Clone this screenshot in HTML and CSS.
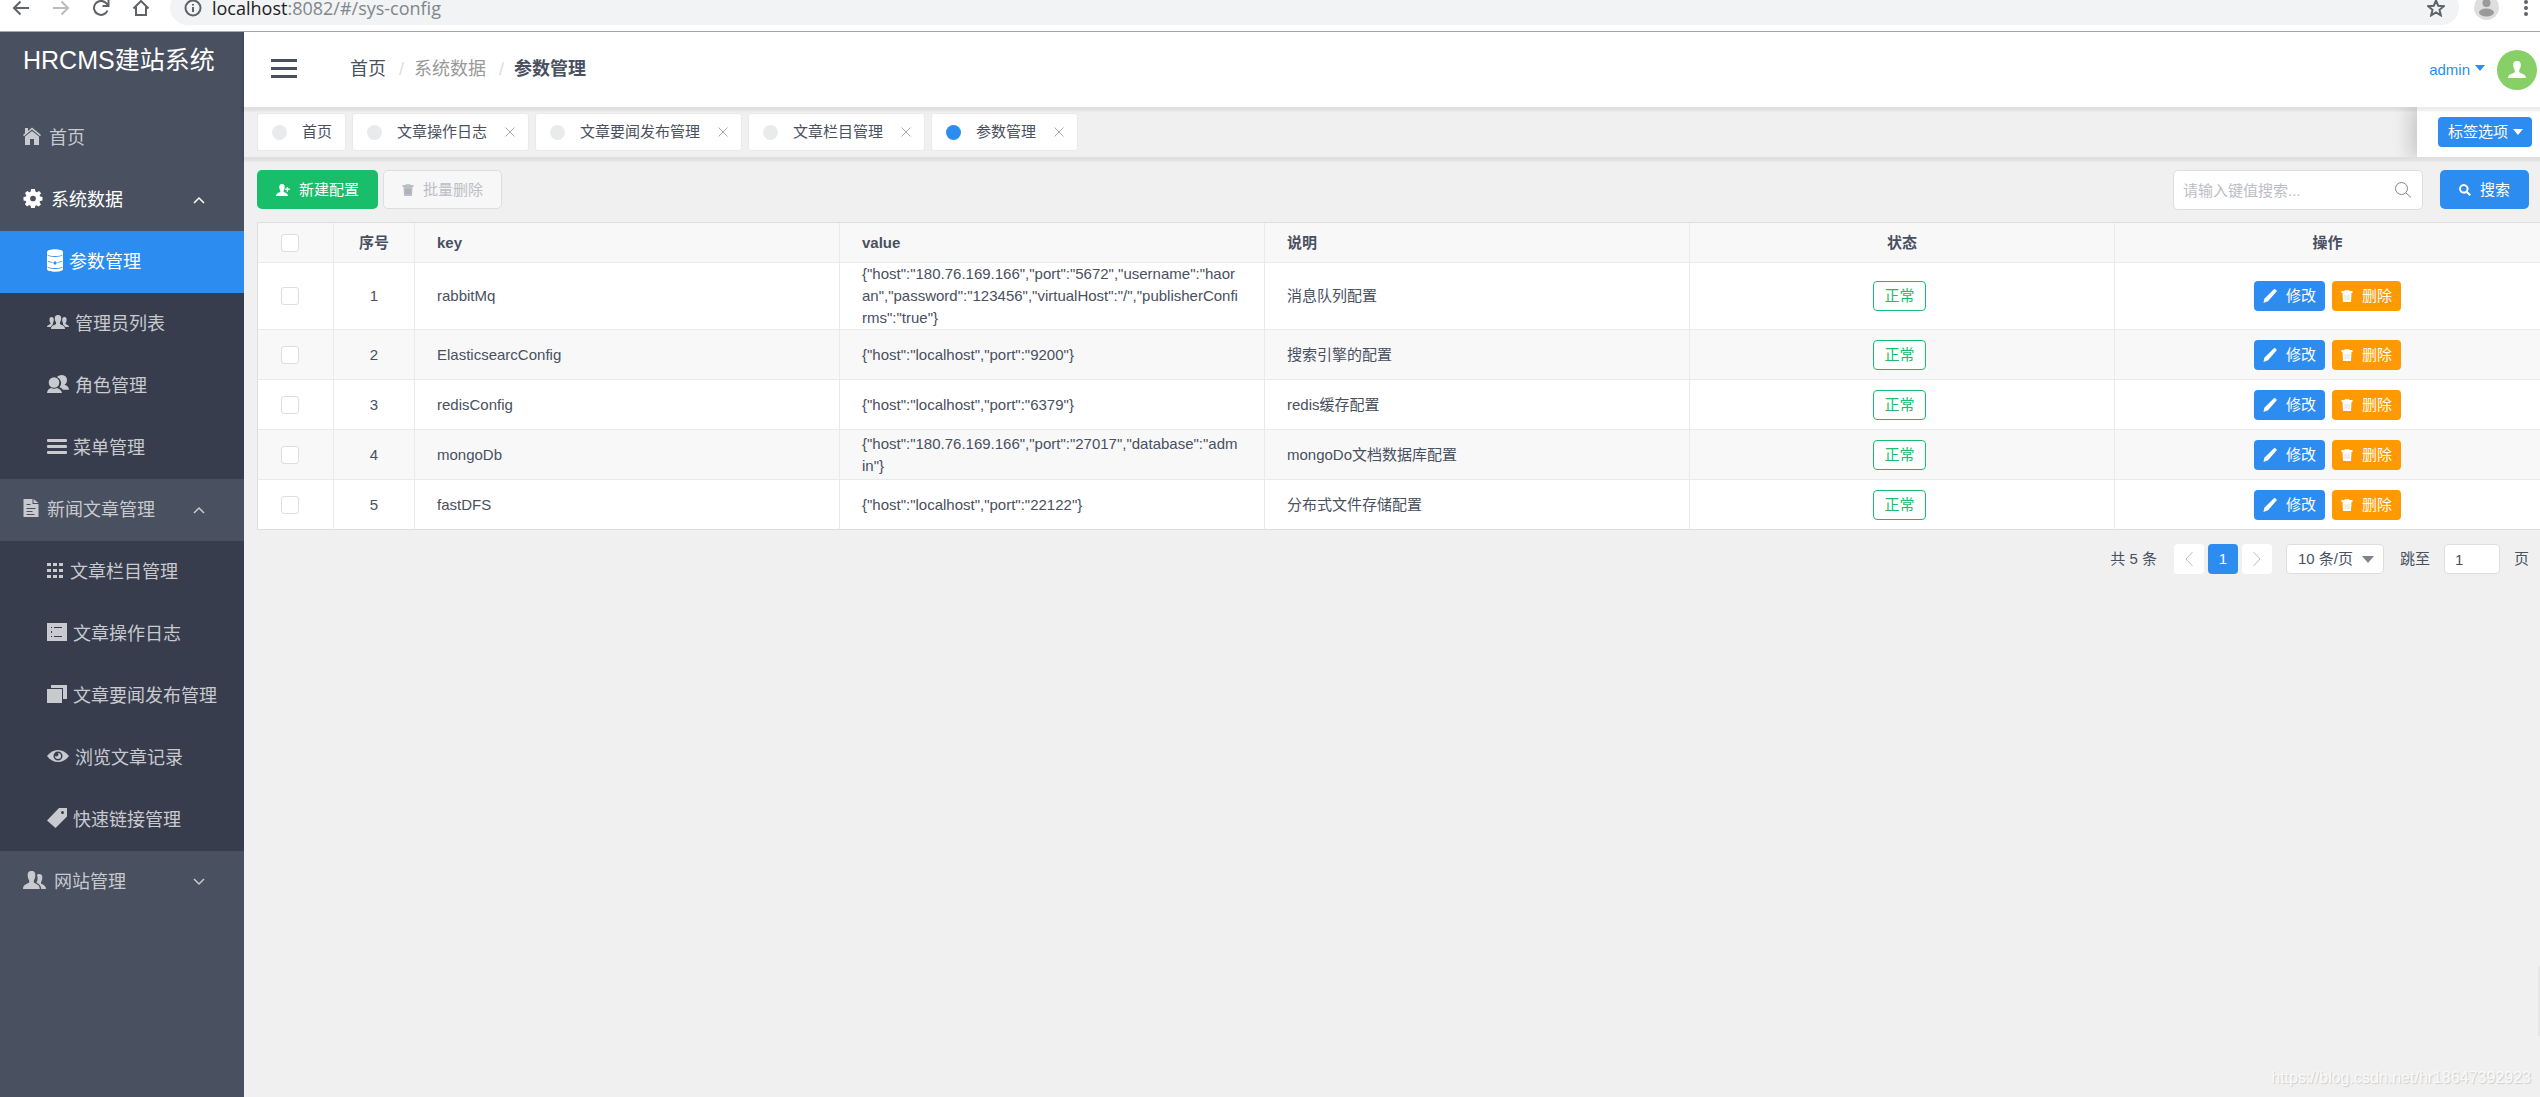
FILE: index.html
```html
<!DOCTYPE html>
<html lang="zh-CN">
<head>
<meta charset="utf-8">
<title>HRCMS建站系统</title>
<link rel="stylesheet" href="styles.css">
</head>
<body>
<svg class="sprite" aria-hidden="true">
  <symbol id="i-home" viewBox="0 0 18 18"><path d="M2 1h3v3L9 .5 18 8l-1 1.300L9 2.600 1 9.300 0 8l2-1.700z"/><path d="M2 9.600 9 4l7 5.600V18h-5v-6H7v6H2z"/></symbol>
  <symbol id="i-gear" viewBox="0 0 20 20"><path fill-rule="evenodd" d="M8 0h4l.6 2.700 1.500.7L16.500 2 18.500 4.500 17 6.700l.5 1.300 2.500.5v3.500l-2.500.6-.6 1.300 1.500 2.300-2.500 2.300-2.200-1.400-1.300.5L12 20H8l-.6-2.500-1.400-.6-2.200 1.500-2.300-2.400 1.400-2.200-.5-1.300L0 12V8.500L2.500 8l.5-1.400L1.500 4.300 4 2l2.100 1.400 1.300-.6zM10 7a3 3 0 1 0 0 6 3 3 0 0 0 0-6z"/></symbol>
  <symbol id="i-db" viewBox="0 0 16 23"><path fill-rule="evenodd" d="M0 3C0-.7 16-.7 16 3v17c0 3.700-16 3.700-16 0zM.5 5.500v.8c2 2.200 13 2.200 15 0v-.8c-2 2-13 2-15 0zm0 12v.8c2 2.200 13 2.200 15 0v-.8c-2 2-13 2-15 0zM1 12v.8l4.500 1.200v-.8zm14 0v.8L10.500 14v-.8zM8 12l-2 2 2 2 2-2z"/></symbol>
  <symbol id="i-team" viewBox="0 0 22 14"><path d="M11 0c2.500 0 3.300 1.500 3.200 3.500 0 2-.8 3-1.200 4v1.500c2 1.500 5 1.500 5 5H4c0-3.500 3-3.500 5-5V7.500c-.4-1-1.200-2-1.200-4C7.700 1.500 8.500 0 11 0zM4.500 2C6 2 7 3 6.800 5c0 1.500-.5 2.300-.9 3v1.500L3.500 12H0c0-2 2-2 3.500-3V8c-.5-.7-1-1.500-1-3C2.400 3 3 2 4.500 2zM17.500 2c1.500 0 2.200 1 2.100 3 0 1.500-.5 2.300-1 3v1c1.500 1 3.400 1 3.400 3h-3.500L16 9.500V8c-.4-.7-.8-1.500-.8-3C15 3 16 2 17.500 2z"/></symbol>
  <symbol id="i-role" viewBox="0 0 22 18"><path d="M15 0a5 5 0 0 1 5 5.300c0 2-1 3.700-2.500 4.500 2.500.8 4.500 2.200 4.500 5h-6c-.7-1.300-2-2-3.500-2.500A6.500 6.500 0 0 0 10 2C11 .7 13 0 15 0z"/><circle cx="7" cy="7.500" r="5.300"/><path d="M0 18c.3-2.700 1.500-4 4-5 2 1 4 1 6 0 2.500 1 4.500 2.300 5 5z"/></symbol>
  <symbol id="i-menu" viewBox="0 0 20 15"><rect width="20" height="3" rx="1"/><rect y="6" width="20" height="3" rx="1"/><rect y="12" width="20" height="3" rx="1"/></symbol>
  <symbol id="i-doc" viewBox="0 0 15 18"><path fill-rule="evenodd" d="M0 0h9v5h6v13H0zM10 0l5 4h-5zM3 5v1h4V5zm0 4v1h9V9zm0 3v1h6v-1zm0 3v1h8v-1z"/></symbol>
  <symbol id="i-grid" viewBox="0 0 17 15"><path d="M0 0h4v3H0zM6 0h4v3H6zM12 0h4v3h-4zM0 6h4v3H0zM6 6h4v3H6zM12 6h4v3h-4zM0 12h4v3H0zM6 12h4v3H6zM12 12h4v3h-4z"/></symbol>
  <symbol id="i-list" viewBox="0 0 20 18"><path fill-rule="evenodd" d="M0 0h20v18H0zM4 4v1h1V4zm3 0v1h8V4zM4 8v2h1V8zm0 5v1h1v-1zm3 0v1h8v-1z"/></symbol>
  <symbol id="i-copy" viewBox="0 0 20 18"><path d="M0 4h15v14H0zM4 0h16v14h-4V3H4z"/></symbol>
  <symbol id="i-eye" viewBox="0 0 22 12"><path fill-rule="evenodd" d="M0 6c3-4 7-6 11-6s8 2 11 6c-3 4-7 6-11 6S3 10 0 6zm11-4.500a4.500 4.500 0 1 0 0 9 4.500 4.500 0 0 0 0-9z"/><path d="M11 3a3 3 0 1 1-3 3l2 .5L11.500 5z"/></symbol>
  <symbol id="i-tag" viewBox="0 0 20 20"><path fill-rule="evenodd" d="M12 0h8v8.500L8.500 20 0 12.500zM15.500 3a1.500 1.500 0 1 0 0 3 1.500 1.500 0 0 0 0-3z"/></symbol>
  <symbol id="i-pair" viewBox="0 0 23 18"><path d="M8.500 0c3 0 4 2 3.800 4.500 0 2.500-.9 3.500-1.500 5v2c2 1.500 6 2 6 6.500H0c0-4.500 4-5 6.200-6.500v-2c-.6-1.500-1.500-2.500-1.500-5C4.500 2 5.500 0 8.500 0z"/><path d="M16 3c2.500 0 3.500 1.500 3.300 4 0 2-.8 3-1.300 4v1.500c1.500 1 5 2 5 5.500h-4.700c-.3-3.500-2.300-5-4.800-6.200.7-1.500 1.300-2.800 1-5.300 0-1.500-.5-2.300-.5-2.600.5-.6 1-.9 2-.9z"/></symbol>
  <symbol id="i-user" viewBox="0 0 18 17"><path d="M9 0c3 0 4 2 3.800 4.500 0 2.500-1.200 3.500-1.600 4.800v2C13 13 18 13 18 17H0c0-4 5-4 6.800-5.700v-2C6.400 8 5.200 7 5.200 4.500 5 2 6 0 9 0z"/></symbol>
  <symbol id="i-adduser" viewBox="0 0 14 12"><path d="M6 0c2.200 0 2.800 1.400 2.700 3.200 0 1.700-.7 2.500-1 3.300v1.300C9 9 12 9 12 12H0c0-3 3-3 4.300-4.200V6.500c-.3-.8-1-1.600-1-3.300C3.200 1.400 3.800 0 6 0zM10.700 3h1.300v1.500h1.800V6H12v1.700h-1.300V6H9.300V4.500h1.400z"/></symbol>
  <symbol id="i-trash" viewBox="0 0 12 12"><path fill-rule="evenodd" d="M3.500 1q0-1 1-1h3q1 0 1 1H11.500v2H.5V1zM4.500 1h3V.7h-3zM1.500 3h9L10 12H2z"/><path d="M4 5l.2 5M6 5v5M8 5l-.2 5" fill="none" stroke="#000" stroke-opacity=".18" stroke-width=".7"/></symbol>
  <symbol id="i-pen" viewBox="0 0 14 14"><path d="M11 .3q.6-.5 1.200 0l1.200 1q.6.6.1 1.300L5 12.300.5 14l.8-4.300z"/></symbol>
  <symbol id="i-search" viewBox="0 0 12 12"><path fill-rule="evenodd" d="M4.800 0a4.800 4.800 0 0 1 4 7.400L12 10.500 10.500 12 7.400 8.900A4.800 4.800 0 1 1 4.800 0zm0 2a2.800 2.800 0 1 0 0 5.600 2.800 2.800 0 0 0 0-5.600z"/></symbol>
  <symbol id="i-close" viewBox="0 0 10 10"><path d="M.5.5l9 9M9.500.5l-9 9" fill="none" stroke="currentColor"/></symbol>
  <symbol id="i-caret" viewBox="0 0 10 6"><path d="M0 0h10L5 6z"/></symbol>
  <symbol id="i-up" viewBox="0 0 12 8"><path d="M1 7l5-5 5 5" fill="none" stroke="currentColor" stroke-width="1.500"/></symbol>
  <symbol id="i-down" viewBox="0 0 12 8"><path d="M1 1l5 5 5-5" fill="none" stroke="currentColor" stroke-width="1.500"/></symbol>
</svg>

<div class="browser">
  <div class="browser-row">
    <button class="nav-btn" aria-label="后退"><svg width="18" height="16" viewBox="0 0 18 16"><path d="M17 8H2M8.500 1.500 2 8l6.500 6.500"/></svg></button>
    <button class="nav-btn off" aria-label="前进"><svg width="18" height="16" viewBox="0 0 18 16"><path d="M1 8h15M9.500 1.500 16 8l-6.500 6.500"/></svg></button>
    <button class="nav-btn" aria-label="刷新"><svg width="18" height="16" viewBox="0 0 18 16"><path d="M15.500 10.500A7 7 0 1 1 14 3l2 2.500M16.500 0v6h-6"/></svg></button>
    <button class="nav-btn" aria-label="主页"><svg width="18" height="16" viewBox="0 0 18 16"><path d="M1.500 8.500 9 1l7.500 7.500M4 7v8h10V7"/></svg></button>
    <div class="address">
      <svg width="18" height="18" viewBox="0 0 18 18"><circle cx="9" cy="9" r="7.500"/><path d="M9 8v5M9 5v1.500"/></svg>
      <span class="url"><b>localhost</b>:8082/#/sys-config</span>
      <svg class="star" width="18" height="18" viewBox="0 0 18 18"><path d="M9 1.500l2.200 5.200 5.500.5-4.200 3.600 1.300 5.500L9 13.400l-4.800 2.900 1.300-5.500L1.300 7.200l5.500-.5z"/></svg>
    </div>
    <svg class="profile" width="25" height="25" viewBox="0 0 25 25"><circle cx="12.500" cy="12.500" r="12.500" fill="#dedede"/><circle cx="12.500" cy="8" r="4" fill="#9a9a9a"/><ellipse cx="12.500" cy="17.500" rx="7.500" ry="4" fill="#9a9a9a"/></svg>
    <svg class="dots" width="4" height="16" viewBox="0 0 4 16"><circle cx="2" cy="2" r="2"/><circle cx="2" cy="8" r="2"/><circle cx="2" cy="14" r="2"/></svg>
  </div>
</div>

<div class="app">
  <aside class="sidebar">
    <h1 class="brand">HRCMS建站系统</h1>
    <nav>
      <a class="item" href="#home"><svg width="18" height="18"><use href="#i-home"/></svg>首页</a>
      <button class="item open"><svg width="20" height="19"><use href="#i-gear"/></svg>系统数据<svg class="chev" width="12" height="8"><use href="#i-up"/></svg></button>
      <div class="sub">
        <a class="item active" href="#sys-config"><svg width="16" height="23"><use href="#i-db"/></svg>参数管理</a>
        <a class="item" href="#admins"><svg width="22" height="14"><use href="#i-team"/></svg>管理员列表</a>
        <a class="item" href="#roles"><svg width="22" height="18"><use href="#i-role"/></svg>角色管理</a>
        <a class="item" href="#menus"><svg width="20" height="15"><use href="#i-menu"/></svg>菜单管理</a>
      </div>
      <button class="item"><svg width="16" height="18"><use href="#i-doc"/></svg>新闻文章管理<svg class="chev" width="12" height="8"><use href="#i-up"/></svg></button>
      <div class="sub">
        <a class="item" href="#columns"><svg width="17" height="15"><use href="#i-grid"/></svg>文章栏目管理</a>
        <a class="item" href="#logs"><svg width="20" height="18"><use href="#i-list"/></svg>文章操作日志</a>
        <a class="item" href="#news"><svg width="20" height="18"><use href="#i-copy"/></svg>文章要闻发布管理</a>
        <a class="item" href="#views"><svg width="22" height="12"><use href="#i-eye"/></svg>浏览文章记录</a>
        <a class="item" href="#links"><svg width="20" height="20"><use href="#i-tag"/></svg>快速链接管理</a>
      </div>
      <button class="item"><svg width="23" height="18"><use href="#i-pair"/></svg>网站管理<svg class="chev" width="12" height="8"><use href="#i-down"/></svg></button>
    </nav>
  </aside>

  <main class="main">
    <header class="topbar">
      <button class="burger" aria-label="收起菜单"><span></span><span></span><span></span></button>
      <ol class="crumbs">
        <li><a href="#home">首页</a></li>
        <li class="dim">系统数据</li>
        <li class="here">参数管理</li>
      </ol>
      <div class="account">
        <a class="user" href="#account">admin<svg width="10" height="6"><use href="#i-caret"/></svg></a>
        <span class="avatar"><svg width="18" height="17"><use href="#i-user"/></svg></span>
      </div>
    </header>

    <div class="tabs">
      <div class="tab-list">
        <div class="tab"><i class="dot"></i>首页</div>
        <div class="tab"><i class="dot"></i>文章操作日志<button class="close" aria-label="关闭"><svg width="10" height="10"><use href="#i-close"/></svg></button></div>
        <div class="tab"><i class="dot"></i>文章要闻发布管理<button class="close" aria-label="关闭"><svg width="10" height="10"><use href="#i-close"/></svg></button></div>
        <div class="tab"><i class="dot"></i>文章栏目管理<button class="close" aria-label="关闭"><svg width="10" height="10"><use href="#i-close"/></svg></button></div>
        <div class="tab"><i class="dot on"></i>参数管理<button class="close" aria-label="关闭"><svg width="10" height="10"><use href="#i-close"/></svg></button></div>
      </div>
      <div class="tab-options"><button class="btn blue small">标签选项<svg width="10" height="6"><use href="#i-caret"/></svg></button></div>
    </div>

    <section class="content">
      <div class="toolbar">
        <button class="btn green"><svg width="14" height="12"><use href="#i-adduser"/></svg>新建配置</button>
        <button class="btn ghost" disabled><svg width="12" height="12"><use href="#i-trash"/></svg>批量删除</button>
        <label class="search">
          <input type="text" placeholder="请输入键值搜索..." aria-label="键值">
          <svg width="16" height="16" viewBox="0 0 16 16"><circle cx="6.500" cy="6.500" r="6"/><path d="M11 11l5 4.500"/></svg>
        </label>
        <button class="btn blue find"><svg width="12" height="12"><use href="#i-search"/></svg>搜索</button>
      </div>

      <table class="grid">
        <colgroup><col class="c-check"><col class="c-no"><col><col><col><col><col></colgroup>
        <thead>
          <tr><th class="ck"><input type="checkbox" aria-label="全选"></th><th class="mid">序号</th><th>key</th><th>value</th><th>说明</th><th class="mid">状态</th><th class="mid">操作</th></tr>
        </thead>
        <tbody>
          <tr><td class="ck"><input type="checkbox" aria-label="选择 1"></td><td class="mid">1</td><td>rabbitMq</td><td>{"host":"180.76.169.166","port":"5672","username":"haoran","password":"123456","virtualHost":"/","publisherConfirms":"true"}</td><td>消息队列配置</td><td class="mid"><span class="tag">正常</span></td><td><div class="acts"><button class="btn blue act"><svg width="14" height="14"><use href="#i-pen"/></svg>修改</button><button class="btn orange act"><svg width="12" height="12"><use href="#i-trash"/></svg>删除</button></div></td></tr>
          <tr><td class="ck"><input type="checkbox" aria-label="选择 2"></td><td class="mid">2</td><td>ElasticsearcConfig</td><td>{"host":"localhost","port":"9200"}</td><td>搜索引擎的配置</td><td class="mid"><span class="tag">正常</span></td><td><div class="acts"><button class="btn blue act"><svg width="14" height="14"><use href="#i-pen"/></svg>修改</button><button class="btn orange act"><svg width="12" height="12"><use href="#i-trash"/></svg>删除</button></div></td></tr>
          <tr><td class="ck"><input type="checkbox" aria-label="选择 3"></td><td class="mid">3</td><td>redisConfig</td><td>{"host":"localhost","port":"6379"}</td><td>redis缓存配置</td><td class="mid"><span class="tag">正常</span></td><td><div class="acts"><button class="btn blue act"><svg width="14" height="14"><use href="#i-pen"/></svg>修改</button><button class="btn orange act"><svg width="12" height="12"><use href="#i-trash"/></svg>删除</button></div></td></tr>
          <tr><td class="ck"><input type="checkbox" aria-label="选择 4"></td><td class="mid">4</td><td>mongoDb</td><td>{"host":"180.76.169.166","port":"27017","database":"admin"}</td><td>mongoDo文档数据库配置</td><td class="mid"><span class="tag">正常</span></td><td><div class="acts"><button class="btn blue act"><svg width="14" height="14"><use href="#i-pen"/></svg>修改</button><button class="btn orange act"><svg width="12" height="12"><use href="#i-trash"/></svg>删除</button></div></td></tr>
          <tr><td class="ck"><input type="checkbox" aria-label="选择 5"></td><td class="mid">5</td><td>fastDFS</td><td>{"host":"localhost","port":"22122"}</td><td>分布式文件存储配置</td><td class="mid"><span class="tag">正常</span></td><td><div class="acts"><button class="btn blue act"><svg width="14" height="14"><use href="#i-pen"/></svg>修改</button><button class="btn orange act"><svg width="12" height="12"><use href="#i-trash"/></svg>删除</button></div></td></tr>
        </tbody>
      </table>

      <div class="pager">
        <span class="total">共 5 条</span>
        <div class="pages">
          <button class="page" aria-label="上一页"><svg width="8" height="16" viewBox="0 0 8 16"><path d="M7.500 1 1 8l6.500 7"/></svg></button>
          <button class="page current">1</button>
          <button class="page" aria-label="下一页"><svg width="8" height="16" viewBox="0 0 8 16"><path d="M.5 1 7 8l-6.500 7"/></svg></button>
        </div>
        <label class="size"><select aria-label="每页条数"><option>10 条/页</option></select><svg width="12" height="7" viewBox="0 0 10 6" preserveAspectRatio="none"><path d="M0 0h10L5 6z"/></svg></label>
        <label class="jump">跳至<input type="text" value="1">页</label>
      </div>
    </section>
    <div class="watermark">https://blog.csdn.net/hr18647392923</div>
  </main>
</div>
</body>
</html>
```

FILE: styles.css
```css
* { box-sizing: border-box; }

body {
  margin: 0;
  min-height: 100vh;
  display: flex;
  flex-direction: column;
  background: #f0f0f0;
  color: #495060;
  font: 15px/22px "Liberation Sans", "Noto Sans CJK SC", sans-serif;
}

svg { display: block; flex: none; fill: currentColor; }
button, input, select { font: inherit; color: inherit; margin: 0; }
button { padding: 0; border: 0; background: none; }
a { color: inherit; text-decoration: none; }
.sprite { position: absolute; width: 0; height: 0; }

/* browser strip */
.browser {
  height: 32px;
  padding-bottom: 6px;
  display: flex;
  align-items: flex-end;
  overflow: hidden;
  background: #fff;
  border-bottom: 1px solid #aaa;
  color: #5f6368;
}
.browser-row {
  flex: 1;
  height: 35px;
  padding: 0 12px;
  display: flex;
  align-items: center;
}
.nav-btn { margin-right: 22px; color: #5f6368; }
.nav-btn:nth-of-type(4) { margin-right: 20px; }
.nav-btn.off { color: #bbb; }
.nav-btn svg, .address svg { fill: none; stroke: currentColor; stroke-width: 2; }
.address {
  flex: 1;
  height: 35px;
  padding: 0 14px;
  display: flex;
  align-items: center;
  gap: 10px;
  border-radius: 18px;
  background: #f1f3f4;
}
.url { font: 18px/16px "Open Sans", sans-serif; color: #80868b; }
.url b { font-weight: 400; color: #202124; }
.star { margin-left: auto; }
.profile { margin: 0 25px 0 15px; }

/* frame */
.app { flex: 1; display: flex; }
.sidebar { width: 244px; flex: none; background: #495060; }
.main { position: relative; flex: 1; min-width: 0; display: flex; flex-direction: column; }

/* resting scrollbar thumb */
.main::after {
  content: "";
  position: absolute;
  right: 0;
  bottom: 61px;
  width: 2px;
  height: 70px;
  background: #e6e6e6;
}

.brand {
  margin: 0;
  height: 75px;
  padding-left: 23px;
  font-size: 25px;
  line-height: 56px;
  font-weight: 400;
  color: #fff;
}
.item {
  width: 100%;
  height: 62px;
  padding: 0 39px 0 23px;
  display: flex;
  align-items: center;
  gap: 8px;
  font-size: 18px;
  color: #c8cace;
  white-space: nowrap;
}
.item svg { margin-bottom: 4px; }
.item .chev { margin: 0 0 0 auto; }
.item.open { color: #fff; }
.sub { background: #383d4e; }
.sub .item { padding: 0 0 0 47px; gap: 6px; }
.item.active { background: #2d8cf0; color: #fff; }

/* top bar */
.topbar {
  position: relative;
  z-index: 2;
  height: 75px;
  padding: 0 3px 0 27px;
  display: flex;
  align-items: center;
  background: #fff;
  box-shadow: 0 2px 2px 2px rgba(0, 0, 0, .07);
}
.burger { width: 26px; margin-bottom: 2px; display: grid; gap: 5px; }
.burger span { height: 3px; background: #495060; }
.crumbs {
  margin: 0 0 2px 53px;
  padding: 0;
  display: flex;
  list-style: none;
  font-size: 18px;
}
.crumbs li + li::before { content: "/"; margin: 0 10px 0 13px; font-weight: 400; color: #dcdee2; }
.dim { color: #999; }
.here { font-weight: 700; }
.account { margin-left: auto; display: flex; align-items: center; gap: 12px; }
.user { display: flex; align-items: center; gap: 5px; color: #2d8cf0; }
.user svg { margin-bottom: 4px; }
.avatar {
  width: 40px;
  height: 40px;
  display: grid;
  place-items: center;
  border-radius: 50%;
  background: #87d068;
  color: #fff;
}

/* page tabs */
.tabs {
  position: relative;
  z-index: 1;
  height: 50px;
  display: flex;
  background: #f0f0f0;
  box-shadow: 0 2px 2px 2px rgba(0, 0, 0, .07);
}
.tab-list { flex: 1; padding: 6px 0 6px 13px; display: flex; gap: 6px; overflow: hidden; }
.tab {
  padding: 0 13px 0 14px;
  display: flex;
  align-items: center;
  border: 1px solid #e8eaec;
  border-radius: 3px;
  background: #fff;
}
.dot { width: 15px; height: 15px; margin-right: 15px; border-radius: 50%; background: #e8eaec; }
.dot.on { background: #2d8cf0; }
.close { margin-left: 18px; color: #aaa; }
.tab-options {
  padding: 0 8px 0 21px;
  display: flex;
  align-items: center;
  background: #fff;
  box-shadow: -4px 0 19px 2px rgba(0, 0, 0, .18);
  clip-path: inset(0 0 0 -30px);
}

/* buttons */
.btn {
  height: 39px;
  padding: 0 19px;
  display: flex;
  align-items: center;
  gap: 9px;
  border-radius: 5px;
  color: #fff;
  white-space: nowrap;
}
.green { background: #19be6b; }
.blue { background: #2d8cf0; }
.orange { background: #f90; }
.ghost { padding: 0 18px; border: 1px solid #dcdee2; background: #f7f7f7; color: #bbbec4; }
.small { height: 30px; padding: 0 9px 0 10px; gap: 5px; border-radius: 4px; }
.find { margin-left: 7px; }
.act { height: 30px; padding: 0 9px; border-radius: 4px; }

/* content */
.content { padding-left: 13px; }
.toolbar { padding: 13px 11px 12px 0; display: flex; gap: 5px; }
.search { position: relative; width: 250px; margin: 0 5px 0 auto; }
.toolbar .search input {
  width: 100%;
  height: 40px;
  padding: 0 38px 0 9px;
  border: 1px solid #dcdee2;
  border-radius: 5px;
  background: #fff;
}
.search input::placeholder { color: #bbbec4; opacity: 1; }
.search svg {
  position: absolute;
  top: 12px;
  right: 12px;
  fill: none;
  stroke: #80848f;
}

.grid {
  width: 100%;
  table-layout: fixed;
  border-collapse: separate;
  border-spacing: 0;
  border-top: 1px solid #dcdee2;
  border-left: 1px solid #dcdee2;
  background: #fff;
}
.c-check { width: 76px; }
.c-no { width: 81px; }
.grid th, .grid td {
  height: 50px;
  padding: 0 25px 0 22px;
  border-bottom: 1px solid #e8eaec;
  border-right: 1px solid #e8eaec;
  text-align: left;
  word-break: break-all;
}
.grid th { height: 40px; background: #f8f8f9; font-weight: 700; }
.grid tr > :last-child { border-right: 0; }
.grid tbody tr:nth-child(even) { background: #f8f8f9; }
.grid tbody tr:last-child td { border-bottom-color: #dcdee2; }
.grid .mid { text-align: center; padding: 0 22px; }
.grid td:last-child { padding: 0 22px; }
.grid .ck { padding: 0 0 0 23px; }
.grid input {
  display: block;
  width: 18px;
  height: 18px;
  appearance: none;
  border: 1px solid #dcdee2;
  border-radius: 3px;
  background: #fff;
}
.tag {
  display: inline-block;
  height: 30px;
  margin-right: 5px;
  padding: 0 10px;
  border: 1px solid #19be6b;
  border-radius: 4px;
  background: #fff;
  color: #19be6b;
  line-height: 28px;
  vertical-align: middle;
}
.acts { display: flex; justify-content: center; gap: 7px; }

/* pagination */
.pager {
  padding: 14px 11px 0 0;
  display: flex;
  justify-content: flex-end;
  align-items: center;
}
.pages { margin: 0 14px 0 17px; display: flex; gap: 4px; }
.page {
  width: 30px;
  height: 30px;
  display: grid;
  place-items: center;
  border-radius: 4px;
  background: #fff;
}
.page svg { fill: none; stroke: #bbbec4; }
.page.current { background: #2d8cf0; color: #fff; }
.size { position: relative; }
.size select {
  width: 98px;
  height: 30px;
  padding: 0 11px;
  appearance: none;
  border: 1px solid #dcdee2;
  border-radius: 4px;
  background: #fff;
}
.size svg { position: absolute; top: 12px; right: 10px; color: #80848f; }
.jump { margin-left: 16px; display: flex; align-items: center; gap: 14px; }
.jump input {
  width: 56px;
  height: 30px;
  padding: 0 10px;
  border: 1px solid #dcdee2;
  border-radius: 4px;
  background: #fff;
}

.watermark {
  margin-top: auto;
  padding: 0 9px 8px 0;
  text-align: right;
  font-size: 16px;
  color: #fafafa;
  text-shadow: 1px 1px 1px #ccc;
}
```
